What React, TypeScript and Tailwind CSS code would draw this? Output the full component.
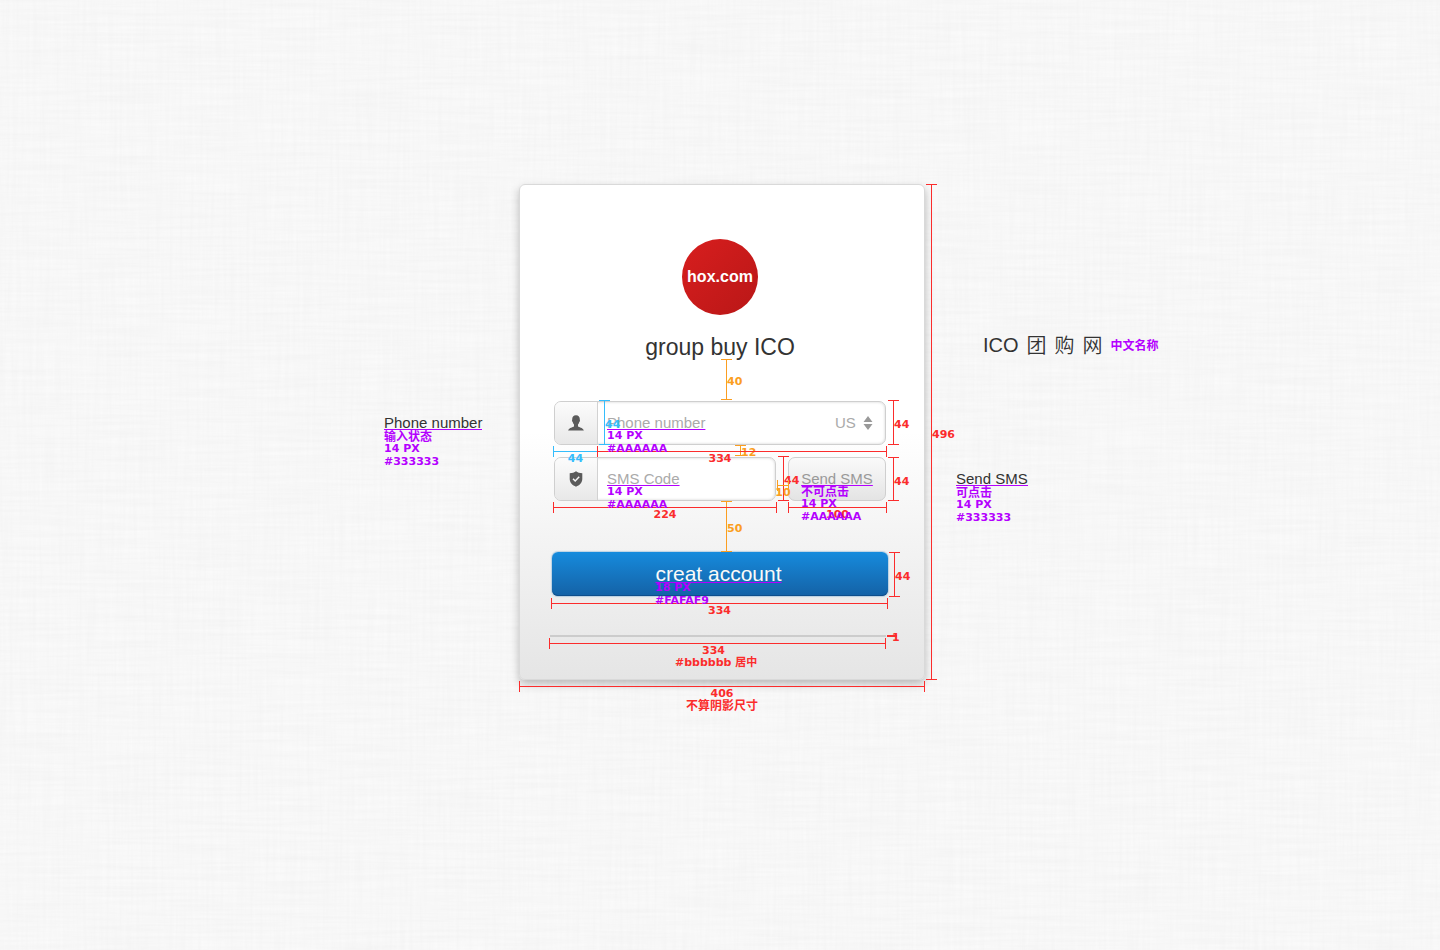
import { useState } from 'react';

type Tone = 'red' | 'orange' | 'blue';

const toneText: Record<Tone, string> = {
  red: 'text-[#fb2c2c]',
  orange: 'text-[#fb9e21]',
  blue: 'text-[#35bdfc]',
};

interface Measure {
  axis: 'x' | 'y';
  tone: Tone;
  /** Position and length of the ruler, relative to the card. */
  place: string;
  label: string;
  labelPlace?: string;
}

const measures: Measure[] = [
  { axis: 'y', tone: 'red', place: 'left-[407px] top-0 h-[496px]', label: '496', labelPlace: 'top-[243px]' },
  { axis: 'y', tone: 'orange', place: 'left-[202px] top-[175px] h-[41px]', label: '40', labelPlace: 'top-[15px]' },
  { axis: 'y', tone: 'blue', place: 'left-[80px] top-[216px] h-[45px]', label: '44' },
  { axis: 'y', tone: 'red', place: 'left-[369px] top-[216px] h-[45px]', label: '44' },
  { axis: 'y', tone: 'red', place: 'left-[369px] top-[273px] h-[44px]', label: '44' },
  { axis: 'y', tone: 'red', place: 'left-[259px] top-[272px] h-[45px]', label: '44' },
  { axis: 'y', tone: 'orange', place: 'left-[216px] top-[261px] h-[11px]', label: '12', labelPlace: 'top-0' },
  { axis: 'y', tone: 'orange', place: 'left-[202px] top-[317px] h-[51px]', label: '50', labelPlace: 'top-[20px]' },
  { axis: 'y', tone: 'red', place: 'left-[370px] top-[368px] h-[45px]', label: '44' },
  { axis: 'x', tone: 'blue', place: 'left-[34px] top-[262px] w-[45px]', label: '44' },
  { axis: 'x', tone: 'red', place: 'left-[78px] top-[262px] w-[290px]', label: '334', labelPlace: 'pr-[44px]' },
  { axis: 'x', tone: 'red', place: 'left-[34px] top-[318px] w-[224px]', label: '224' },
  { axis: 'x', tone: 'red', place: 'left-[269px] top-[318px] w-[99px]', label: '100' },
  { axis: 'x', tone: 'orange', place: 'left-[258px] top-[296px] w-[12px]', label: '10' },
  { axis: 'x', tone: 'red', place: 'left-[32px] top-[414px] w-[337px]', label: '334' },
  { axis: 'x', tone: 'red', place: 'left-[30px] top-[454px] w-[337px]', label: '334', labelPlace: 'pr-[8px]' },
  { axis: 'x', tone: 'red', place: 'left-0 top-[497px] w-full', label: '406' },
];

const pixelText = "font-['DejaVu_Sans','Noto_Sans_CJK_SC',sans-serif] text-[11px] font-bold leading-[13px] whitespace-nowrap";
const pixelHan = "font-['Noto_Sans_CJK_SC',sans-serif] text-[12px] font-bold leading-[12px] whitespace-nowrap";

function Ruler({ axis, tone, place, label, labelPlace = '' }: Measure) {
  if (axis === 'y') {
    return (
      <div className={`pointer-events-none absolute w-[11px] border-y border-current ${toneText[tone]} ${place}`}>
        <div className="mx-auto h-full w-px bg-current" />
        <span className={`absolute left-[6px] ${labelPlace || 'top-[17px]'} ${pixelText}`}>{label}</span>
      </div>
    );
  }
  return (
    <div className={`pointer-events-none absolute flex h-[11px] items-center border-x border-current ${toneText[tone]} ${place}`}>
      <div className="h-px w-full bg-current" />
      <span className={`absolute inset-x-0 top-[6px] flex justify-center ${labelPlace} ${pixelText}`}>{label}</span>
    </div>
  );
}

interface NoteProps {
  place: string;
  sample?: string;
  state?: string;
  lines: string[];
}

function Note({ place, sample, state, lines }: NoteProps) {
  return (
    <div className={`pointer-events-none absolute flex flex-col text-[#b400ff] ${place}`}>
      {sample && (
        <span className="border-b border-[#b400ff] text-[15px] leading-[12px] whitespace-nowrap text-[#333333]">{sample}</span>
      )}
      {state && <span className={pixelHan}>{state}</span>}
      {lines.map((line) => (
        <span key={line} className={pixelText}>{line}</span>
      ))}
    </div>
  );
}

function Linen() {
  return (
    <svg className="absolute inset-0 h-full w-full" aria-hidden="true">
      <filter id="warp" x="0" y="0" width="100%" height="100%" colorInterpolationFilters="sRGB">
        <feTurbulence type="fractalNoise" baseFrequency="0.3 0.012" numOctaves="3" seed="4" />
        <feColorMatrix values="0.045 0 0 0 0.947  0.045 0 0 0 0.947  0.045 0 0 0 0.947  0 0 0 0 1" />
      </filter>
      <filter id="weft" x="0" y="0" width="100%" height="100%" colorInterpolationFilters="sRGB">
        <feTurbulence type="fractalNoise" baseFrequency="0.012 0.3" numOctaves="3" seed="9" />
        <feColorMatrix values="0.045 0 0 0 0.947  0.045 0 0 0 0.947  0.045 0 0 0 0.947  0 0 0 0 1" />
      </filter>
      <rect width="100%" height="100%" filter="url(#warp)" />
      <rect width="100%" height="100%" filter="url(#weft)" opacity="0.5" />
    </svg>
  );
}

function PersonIcon() {
  return (
    <svg width="16" height="16" viewBox="0 0 16 16" fill="#5b5b5b" aria-hidden="true">
      <path d="M8 .3C5.400.3 4.100 1.900 4.200 4.500c0 .5-.3.8-.2 1.300.1.700.4 1.100.8 1.400.2 1 .6 1.700 1.200 2.300v1.700c-.7 1.200-4.800 1.100-5.900 4.300h15.800c-1.100-3.200-5.200-3.100-5.900-4.300V9.500c.6-.6 1-1.300 1.200-2.300.4-.3.7-.7.8-1.400.1-.5-.2-.8-.2-1.300C11.900 1.900 10.600.3 8 .3Z" />
    </svg>
  );
}

function ShieldIcon() {
  return (
    <svg width="14" height="16" viewBox="0 0 14 16" aria-hidden="true">
      <path d="M7 .3C8.500 1.500 10.800 2.200 13.300 2.300V8c0 3.800-2.900 6.300-6.300 7.700C3.600 14.300.7 11.800.7 8V2.300C3.200 2.200 5.500 1.500 7 .3Z" fill="#5b5b5b" />
      <path d="m4 7.800 2.200 2.200 4-4.200" fill="none" stroke="#f5f5f5" strokeWidth="1.500" />
    </svg>
  );
}

const fieldBox =
  'flex h-11 overflow-hidden rounded-[7px] border border-[#cfcfcf] bg-white shadow-[inset_0_0_3px_rgba(0,0,0,0.18)]';
const iconCell =
  'flex w-[43px] shrink-0 items-center justify-center border-r border-[#d2d2d2] bg-linear-to-b from-[#fcfcfc] to-[#e8e8e8]';
const inputText =
  'min-w-0 flex-1 bg-transparent pl-[9px] text-[15px] text-[#333333] outline-none placeholder:text-[#aaaaaa] placeholder:underline placeholder:decoration-[#b400ff] placeholder:decoration-1 placeholder:underline-offset-1 placeholder:[text-decoration-skip-ink:none]';

function SignUpForm() {
  const [phone, setPhone] = useState('');
  const [code, setCode] = useState('');
  return (
    <form className="flex flex-col" onSubmit={(e) => e.preventDefault()}>
      <div className="flex flex-col gap-3 px-[2px]">
        <div className={fieldBox}>
          <label htmlFor="phone" className={iconCell}>
            <PersonIcon />
          </label>
          <input
            id="phone"
            type="tel"
            aria-label="Phone number"
            placeholder="Phone number"
            className={inputText}
            value={phone}
            onChange={(e) => setPhone(e.target.value)}
          />
          <div className="relative mr-3 flex w-[38px] items-center">
            <select aria-label="Country" className="w-full appearance-none bg-transparent text-[15px] text-[#aaaaaa] outline-none">
              <option>US</option>
            </select>
            <svg className="pointer-events-none absolute right-0" width="10" height="14" viewBox="0 0 10 14" fill="#999999" aria-hidden="true">
              <path d="M5 0 9.500 6H.5Z M5 14 .5 8h9Z" />
            </svg>
          </div>
        </div>
        <div className="flex gap-3">
          <div className={`flex-1 ${fieldBox}`}>
            <label htmlFor="code" className={iconCell}>
              <ShieldIcon />
            </label>
            <input
              id="code"
              type="text"
              aria-label="SMS Code"
              placeholder="SMS Code"
              className={inputText}
              value={code}
              onChange={(e) => setCode(e.target.value)}
            />
          </div>
          <button
            type="button"
            className="h-11 w-[98px] rounded-[7px] border border-[#cfcfcf] bg-linear-to-b from-[#fafafa] to-[#e4e4e4] text-[15px] text-[#999999] underline decoration-[#b400ff] decoration-1 underline-offset-1 [text-decoration-skip-ink:none]"
          >
            Send SMS
          </button>
        </div>
      </div>
      <button
        type="submit"
        className="mt-[51px] h-11 rounded-[6px] bg-linear-to-b from-[#168bdd] to-[#1462a6] pr-[3px] text-[21px] leading-[42px] text-[#fafaf9] underline decoration-[#b400ff] decoration-1 underline-offset-1 shadow-[0_0_1px_1px_rgba(120,170,210,0.45),inset_0_-1px_0_#0f4f8c]"
      >
        creat account
      </button>
    </form>
  );
}

export default function App() {
  return (
    <main className="relative flex min-h-screen justify-center overflow-hidden bg-[#f7f7f7] pt-[184px] pl-1 font-['Liberation_Sans',Arial,sans-serif]">
      <Linen />
      <div className="relative w-[406px] self-start">
        <section className="rounded-[6px] border border-[#d9d9d9] bg-linear-to-b from-white from-50% to-[#e5e5e5] pt-[54px] pr-9 pb-[42px] pl-8 shadow-[0_4px_8px_rgba(0,0,0,0.25)]">
          <div className="mx-auto flex size-[76px] items-center justify-center rounded-full bg-linear-to-br from-[#d81e1e] to-[#b91717] text-[16px] font-bold text-white">
            hox.com
          </div>
          <h1 className="mt-[18px] mb-[40px] text-center text-[23px] leading-[28px] text-[#333333]">group buy ICO</h1>
          <SignUpForm />
          <hr className="mt-[39px] mr-[2px] -ml-[2px] h-[2px] border-0 bg-[#cccccc]" />
        </section>

        {measures.map((m) => (
          <Ruler key={m.place} {...m} />
        ))}

        <div className="absolute top-[451px] left-[368px] h-[2px] w-[10px] bg-[#fb2c2c]" />
        <span className={`absolute top-[447px] left-[373px] text-[#fb2c2c] ${pixelText}`}>1</span>
        <span className={`absolute top-[472px] left-[156px] text-[#fb2c2c] ${pixelText}`}>#bbbbbb 居中</span>
        <span className={`absolute inset-x-0 top-[515px] text-center text-[#fb2c2c] ${pixelHan}`}>不算阴影尺寸</span>

        <Note place="left-[88px] top-[245px]" lines={['14 PX', '#AAAAAA']} />
        <Note place="left-[88px] top-[301px]" lines={['14 PX', '#AAAAAA']} />
        <Note place="left-[282px] top-[301px]" state="不可点击" lines={['14 PX', '#AAAAAA']} />
        <Note place="left-[136px] top-[397px]" lines={['18 PX', '#FAFAF9']} />
        <Note place="-left-[135px] top-[233px]" sample="Phone number" state="输入状态" lines={['14 PX', '#333333']} />
        <Note place="left-[437px] top-[289px]" sample="Send SMS" state="可点击" lines={['14 PX', '#333333']} />

        <div className="absolute top-[146px] left-[464px] flex items-center gap-2 font-['Noto_Sans_CJK_SC',sans-serif] text-[20px] leading-[30px] font-[350] whitespace-nowrap text-[#333333]">
          <span className="font-['Liberation_Sans',Arial,sans-serif]">ICO</span>
          <span>团</span>
          <span>购</span>
          <span>网</span>
          <span className={`text-[#b400ff] ${pixelHan}`}>中文名称</span>
        </div>
      </div>
    </main>
  );
}
